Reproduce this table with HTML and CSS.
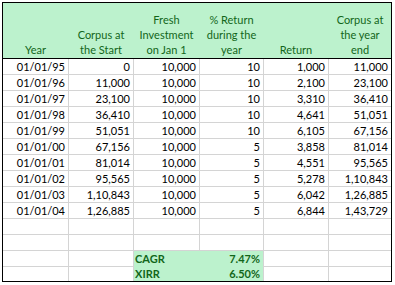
FILE: index.html
```html
<!DOCTYPE html>
<html lang="en">
<head>
<meta charset="utf-8">
<title>Corpus growth</title>
<link rel="stylesheet" href="styles.css">
</head>
<body>
<div class="sheet">
  <div class="head">
    <div class="hc">Year</div>
    <div class="hc">Corpus at<br>the Start</div>
    <div class="hc">Fresh<br>Investment<br>on Jan 1</div>
    <div class="hc">% Return<br>during the<br>year</div>
    <div class="hc">Return</div>
    <div class="hc">Corpus at<br>the year<br>end</div>
  </div>
  <div class="body">
    <div class="c">01/01/95</div><div class="c">0</div><div class="c">10,000</div><div class="c">10</div><div class="c">1,000</div><div class="c">11,000</div>
    <div class="c">01/01/96</div><div class="c">11,000</div><div class="c">10,000</div><div class="c">10</div><div class="c">2,100</div><div class="c">23,100</div>
    <div class="c">01/01/97</div><div class="c">23,100</div><div class="c">10,000</div><div class="c">10</div><div class="c">3,310</div><div class="c">36,410</div>
    <div class="c">01/01/98</div><div class="c">36,410</div><div class="c">10,000</div><div class="c">10</div><div class="c">4,641</div><div class="c">51,051</div>
    <div class="c">01/01/99</div><div class="c">51,051</div><div class="c">10,000</div><div class="c">10</div><div class="c">6,105</div><div class="c">67,156</div>
    <div class="c">01/01/00</div><div class="c">67,156</div><div class="c">10,000</div><div class="c">5</div><div class="c">3,858</div><div class="c">81,014</div>
    <div class="c">01/01/01</div><div class="c">81,014</div><div class="c">10,000</div><div class="c">5</div><div class="c">4,551</div><div class="c">95,565</div>
    <div class="c">01/01/02</div><div class="c">95,565</div><div class="c">10,000</div><div class="c">5</div><div class="c">5,278</div><div class="c">1,10,843</div>
    <div class="c">01/01/03</div><div class="c">1,10,843</div><div class="c">10,000</div><div class="c">5</div><div class="c">6,042</div><div class="c">1,26,885</div>
    <div class="c">01/01/04</div><div class="c">1,26,885</div><div class="c">10,000</div><div class="c">5</div><div class="c">6,844</div><div class="c">1,43,729</div>
    <div class="c"></div><div class="c"></div><div class="c"></div><div class="c"></div><div class="c"></div><div class="c"></div>
    <div class="c"></div><div class="c"></div><div class="c"></div><div class="c"></div><div class="c"></div><div class="c"></div>
    <div class="c"></div><div class="c"></div>
    <div class="summary">
      <div class="sl">CAGR</div><div class="sv">7.47%</div>
      <div class="sl">XIRR</div><div class="sv">6.50%</div>
    </div>
    <div class="c"></div><div class="c"></div>
    <div class="c"></div><div class="c"></div><div class="c"></div><div class="c"></div>
  </div>
</div>
</body>
</html>
```

FILE: styles.css
```css
html, body {
  margin: 0;
  padding: 0;
  background: #ffffff;
}

body {
  font-family: Lato, "Open Sans", sans-serif;
  font-size: 11px;
  color: #000000;
}

.sheet {
  margin: 2px 0 0 2px;
  width: 388px;
  border: 1px solid #000000;
}

.head {
  display: grid;
  grid-template-columns: 65px 64px 65px 63px 64px 62px;
  column-gap: 1px;
  height: 55px;
  background: #bcf2cd;
  border-bottom: 1px solid #000000;
}

.hc {
  display: flex;
  align-items: flex-end;
  justify-content: center;
  text-align: center;
  line-height: 15px;
  padding-bottom: 1px;
  color: #12661a;
}

.body {
  display: grid;
  grid-template-columns: 65px 64px 65px 63px 64px 62px;
  grid-template-rows: repeat(13, 15px) 14px;
  gap: 1px;
  background: #d4d4d4;
}

.c {
  background: #ffffff;
  text-align: right;
  padding-right: 3px;
  line-height: 15px;
  white-space: nowrap;
}

.summary {
  grid-column: 3 / 5;
  grid-row: 13 / 15;
  display: grid;
  grid-template-columns: 65px 64px;
  grid-template-rows: 15px 15px;
  background: #bcf2cd;
  font-weight: bold;
  color: #12661a;
  line-height: 15px;
}

.sl {
  padding-left: 1px;
}

.sv {
  text-align: right;
  padding-right: 3px;
}
```
